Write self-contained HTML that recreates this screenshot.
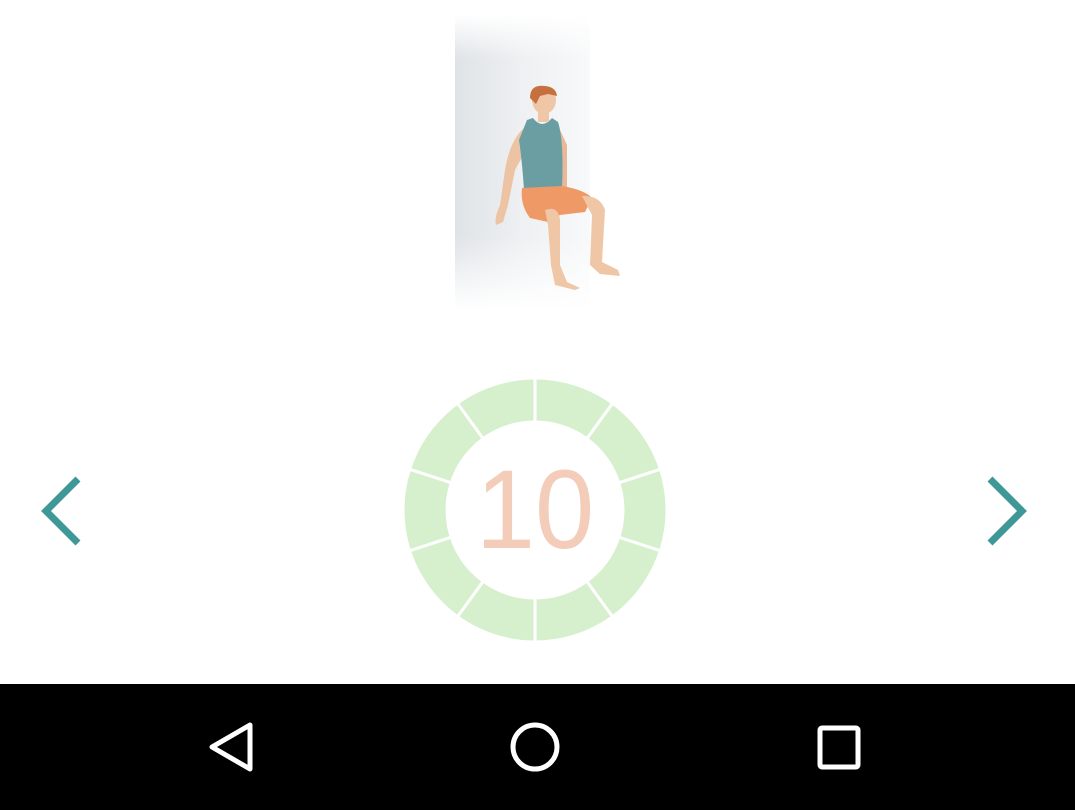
<!DOCTYPE html>
<html><head><style>
html,body{margin:0;padding:0;background:#fff;width:1075px;height:810px;overflow:hidden;font-family:"Liberation Sans",sans-serif}
</style></head><body>
<svg width="1075" height="810" viewBox="0 0 1075 810" style="position:absolute;left:0;top:0">
<defs>
<linearGradient id="wall" x1="0" y1="0" x2="1" y2="0">
<stop offset="0" stop-color="#dfe3e7"/><stop offset="0.5" stop-color="#eef0f2"/><stop offset="1" stop-color="#f8f9fa"/>
</linearGradient>
<linearGradient id="fade" x1="0" y1="0" x2="0" y2="1">
<stop offset="0" stop-color="#fff" stop-opacity="1"/><stop offset="0.15" stop-color="#fff" stop-opacity="0"/><stop offset="0.75" stop-color="#fff" stop-opacity="0"/><stop offset="1" stop-color="#fff" stop-opacity="1"/>
</linearGradient>
</defs>
<rect x="455" y="15" width="135" height="295" fill="url(#wall)"/>
<rect x="455" y="15" width="135" height="295" fill="url(#fade)"/>
<g>
<path d="M524 128 Q510 140 505 170 L500 205 Q494 218 496 225 L503 222 L508 205 L515 170 L526 150 Z" fill="#edc4a3"/>
<path d="M560 130 L567 145 L567 190 L562 192 Z" fill="#e8b898"/>
<path d="M527 120 L533 118 Q542 130 552 118 L558 122 Q564 140 562 188 L524 190 Q522 160 519 140 Z" fill="#6b9ea3"/>
<rect x="538" y="108" width="11" height="14" fill="#efc6a6"/>
<ellipse cx="544" cy="100" rx="12" ry="14" fill="#efc6a6"/>
<path d="M530 98 Q530 84 545 86 Q556 87 557 96 L548 94 L540 96 L536 104 Z" fill="#c7703f"/>
<path d="M522 188 L562 186 Q585 190 592 198 L585 212 L560 215 L548 222 L530 218 Q520 205 522 188 Z" fill="#ee9966"/>
<path d="M545 210 Q558 205 560 220 L560 265 L567 282 L580 288 L575 290 L555 285 L551 265 L548 225 Z" fill="#efc6a6"/>
<path d="M582 196 Q600 195 605 210 L602 262 L618 270 L620 276 L600 274 L590 265 L592 215 Z" fill="#efc6a6"/>
</g>
<g transform="translate(535,510)">
<circle r="110" fill="none" stroke="#d6f0cd" stroke-width="41"/>
<g stroke="#fff" stroke-width="3">
<line x1="0" y1="-88" x2="0" y2="-132" transform="rotate(0)"/>
<line x1="0" y1="-88" x2="0" y2="-132" transform="rotate(36)"/>
<line x1="0" y1="-88" x2="0" y2="-132" transform="rotate(72)"/>
<line x1="0" y1="-88" x2="0" y2="-132" transform="rotate(108)"/>
<line x1="0" y1="-88" x2="0" y2="-132" transform="rotate(144)"/>
<line x1="0" y1="-88" x2="0" y2="-132" transform="rotate(180)"/>
<line x1="0" y1="-88" x2="0" y2="-132" transform="rotate(216)"/>
<line x1="0" y1="-88" x2="0" y2="-132" transform="rotate(252)"/>
<line x1="0" y1="-88" x2="0" y2="-132" transform="rotate(288)"/>
<line x1="0" y1="-88" x2="0" y2="-132" transform="rotate(324)"/>
</g>
<text x="0" y="38" text-anchor="middle" font-family="Liberation Sans, sans-serif" font-size="112" fill="#f3cdb9" transform="scale(0.95,1)">10</text>
</g>
<polyline points="78,479 46,511 78,543" fill="none" stroke="#3f9898" stroke-width="7"/>
<polyline points="990,479 1022,511 990,543" fill="none" stroke="#3f9898" stroke-width="7"/>
<rect x="0" y="684" width="1075" height="126" fill="#000"/>
<path d="M250 725 L250 769 L212 747 Z" fill="none" stroke="#fff" stroke-width="5" stroke-linejoin="round"/>
<circle cx="535" cy="747" r="22" fill="none" stroke="#fff" stroke-width="5"/>
<rect x="820" y="728" width="38" height="39" rx="2" fill="none" stroke="#fff" stroke-width="5"/>
</svg>
</body></html>
